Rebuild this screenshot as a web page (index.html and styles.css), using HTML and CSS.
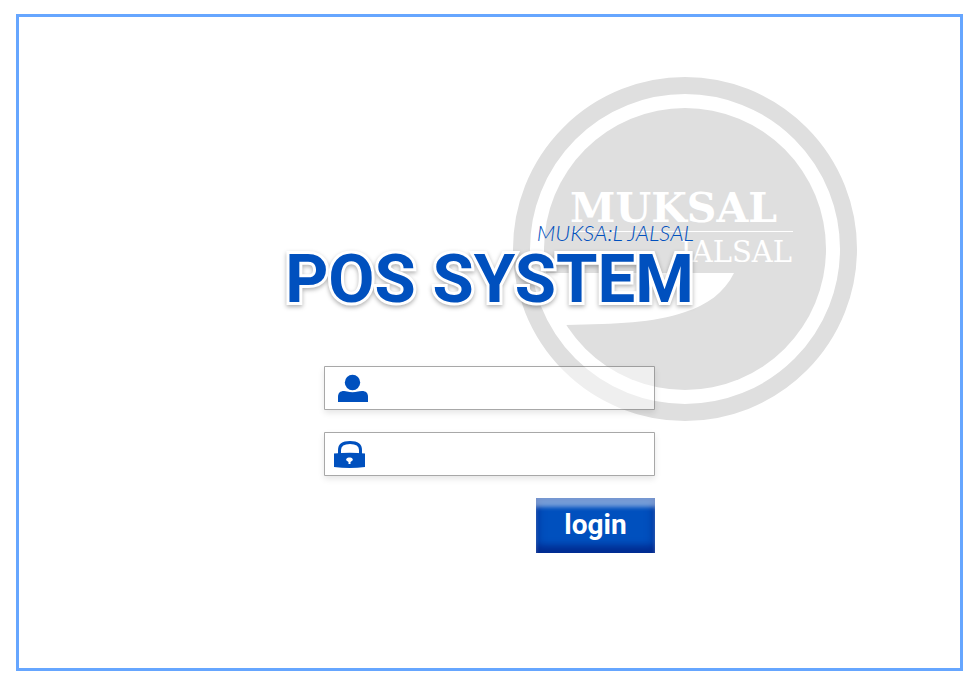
FILE: index.html
```html
<!DOCTYPE html>
<html lang="en">
<head>
<meta charset="utf-8">
<title>POS SYSTEM</title>
<link rel="stylesheet" href="styles.css">
</head>
<body>
<main class="frame">
  <svg class="emblem" viewBox="0 0 344 346" aria-hidden="true">
    <circle cx="172" cy="173" r="163.5" fill="none" stroke="#dfdfdf" stroke-width="17"/>
    <circle cx="172" cy="173" r="141" fill="#dfdfdf"/>
    <path d="M24 197H221C211 217 194 229 172 236C140 247 104 248 53 249L40 249L24 215Z" fill="#fff"/>
    <path d="M59 155.500H280" stroke="#fff" stroke-width="1"/>
    <text class="emblem-name" x="57" y="146">MUKSAL</text>
    <text class="emblem-sub" x="279" y="186" text-anchor="end">JALSAL</text>
  </svg>
  <header class="brand">
    <p class="tagline">MUKSA:L JALSAL</p>
    <h1 class="title">POS SYSTEM</h1>
  </header>
  <form class="login">
    <label class="field">
      <svg class="icon" viewBox="0 0 32 32" aria-hidden="true">
        <circle cx="15.500" cy="10.500" r="7.700"/>
        <path d="M1 30V25C1 21 3 19 7 19Q9 19 10 19.500Q15.500 21 21 19.500Q22 19 25 19C29 19 31 21 31 25V30Z"/>
      </svg>
      <input class="input" type="text" aria-label="User name">
    </label>
    <label class="field field-password">
      <svg class="icon" viewBox="0 0 32 32" aria-hidden="true">
        <path d="M5.500 16V12C5.500 6.500 10 4.500 16 4.500S26.500 6.500 26.500 12V16" fill="none" stroke="#0050be" stroke-width="3"/>
        <path fill-rule="evenodd" d="M0 15.500Q16 14 31 15.500V29Q16 31 0 29ZM15.500 19.500C13 19.500 11.500 21 12.500 22.500L14.500 24V26H16.500V24L18.500 22.500C19.500 21 18 19.500 15.500 19.500Z"/>
      </svg>
      <input class="input" type="password" aria-label="Password">
    </label>
    <button class="submit" type="submit">login</button>
  </form>
</main>
</body>
</html>
```
FILE: styles.css
```css
* {
  box-sizing: border-box;
}

body {
  margin: 0;
  padding: 14px 16px 13px;
  min-height: 100vh;
  display: flex;
  background: #fff;
  font-family: Roboto, "Liberation Sans", sans-serif;
}

.frame {
  position: relative;
  flex: 1;
  display: flex;
  flex-direction: column;
  align-items: center;
  padding: 204px 16px 16px;
  border: 3px solid #66a6ff;
}

.emblem {
  position: absolute;
  top: 59px;
  left: calc(50% + 23px);
  width: 344px;
  height: 346px;
}

.emblem text {
  fill: #fff;
  font-family: "DejaVu Serif", serif;
}

.emblem .emblem-name {
  font-size: 41px;
  font-weight: 700;
}

.emblem .emblem-sub {
  font-size: 29px;
}

.brand {
  position: relative;
  display: flex;
  flex-direction: column;
}

.tagline {
  margin: 0;
  color: #0050be;
  font-family: Lato, sans-serif;
  font-size: 22px;
  font-style: italic;
  font-weight: 300;
  line-height: 24px;
  text-align: right;
}

.title {
  margin: 0;
  color: #0050be;
  font-size: 67px;
  font-weight: 700;
  line-height: 68px;
  -webkit-text-stroke: 6px #fff;
  paint-order: stroke fill;
  stroke-linejoin: round;
  filter: drop-shadow(0 2px 2px rgba(0, 0, 0, 0.3));
}

.login {
  position: relative;
  display: flex;
  flex-direction: column;
  gap: 22px;
  width: 331px;
  max-width: 100%;
  margin-top: 53px;
}

.field {
  display: flex;
  align-items: center;
  gap: 12px;
  height: 44px;
  padding: 0 12px;
  border: 1px solid rgba(0, 0, 0, 0.34);
  border-radius: 1px;
  background: rgba(255, 255, 255, 0.5);
  box-shadow: 0 3px 6px rgba(0, 0, 0, 0.1);
}

.field-password {
  padding-left: 9px;
}

.icon {
  flex: none;
  width: 32px;
  height: 32px;
  fill: #0050be;
}

.input {
  flex: 1;
  min-width: 0;
  height: 100%;
  padding: 0;
  border: 0;
  outline: 0;
  background: transparent;
  font: inherit;
  font-size: 18px;
}

.submit {
  align-self: flex-end;
  width: 119px;
  height: 55px;
  padding: 0 0 2px;
  border: 0;
  background: #0050be;
  box-shadow: inset 0 10px 4px -1px rgba(255, 255, 255, 0.46),
    inset 0 -10px 6px -2px rgba(0, 32, 130, 0.6),
    inset 0 0 8px 2px rgba(0, 40, 140, 0.6);
  color: #fff;
  font-family: inherit;
  font-size: 28px;
  font-weight: 700;
  line-height: 32px;
}
```
